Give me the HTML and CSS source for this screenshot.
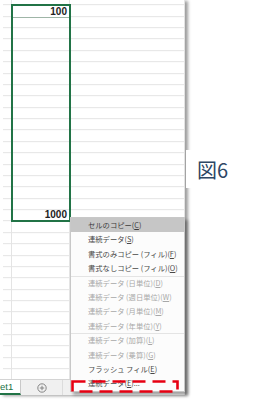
FILE: index.html
```html
<!DOCTYPE html>
<html lang="ja">
<head>
<meta charset="utf-8">
<link rel="stylesheet" href="styles.css">
</head>
<body>
<div class="stage">
  <div class="window">
    <div class="grid">
      <div class="cols">
        <div class="col col-a"></div>
        <div class="col col-b"></div>
        <div class="col col-c"></div>
      </div>
      <div class="selection">
        <div class="cell active">100</div>
        <div class="cell last">1000</div>
      </div>
    </div>
    <div class="tabbar">
      <div class="tab">et1</div>
      <div class="addsheet">
        <svg width="10" height="10" viewBox="0 0 10 10"><circle cx="5" cy="5" r="4.2" fill="none" stroke="#7a7a7a" stroke-width="0.9"/><path d="M5 2.8V7.2M2.8 5H7.2" stroke="#7a7a7a" stroke-width="0.9"/></svg>
      </div>
      <div class="tabrest"></div>
    </div>
  </div>

  <div class="label">図6</div>

  <div class="menu">
    <div class="item hl">セルのコピー(<u>C</u>)</div>
    <div class="item">連続データ(<u>S</u>)</div>
    <div class="item">書式のみコピー (フィル)(<u>F</u>)</div>
    <div class="item">書式なしコピー (フィル)(<u>O</u>)</div>
    <div class="item off sep">連続データ (日単位)(<u>D</u>)</div>
    <div class="item off">連続データ (週日単位)(<u>W</u>)</div>
    <div class="item off">連続データ (月単位)(<u>M</u>)</div>
    <div class="item off">連続データ (年単位)(<u>Y</u>)</div>
    <div class="item off sep">連続データ (加算)(<u>L</u>)</div>
    <div class="item off">連続データ (乗算)(<u>G</u>)</div>
    <div class="item">フラッシュ フィル(<u>E</u>)</div>
    <div class="item">連続データ(<u>E</u>)...</div>
  </div>

  <svg class="redbox" width="112" height="16" viewBox="0 0 112 16">
    <rect x="1.5" y="1.5" width="105" height="10" fill="none" stroke="#e60012" stroke-width="2.6" stroke-dasharray="13 7"/>
  </svg>
</div>
</body>
</html>
```

FILE: styles.css
```css
html, body {
  margin: 0;
  padding: 0;
  background: #ffffff;
}
.stage {
  position: relative;
  width: 254px;
  height: 401px;
  overflow: hidden;
  background: #ffffff;
}
.window {
  width: 184px;
  height: 395px;
  display: flex;
  flex-direction: column;
  border-right: 1px solid #e3e3e3;
  box-shadow: 3px 1px 3px rgba(0, 0, 0, 0.38);
  background: #ffffff;
}
.grid {
  position: relative;
  flex: 1;
  padding-left: 3px;
}
.cols {
  display: flex;
  height: 100%;
  background: repeating-linear-gradient(to bottom, transparent 0, transparent 10.37px, #e4e4e4 10.37px, #e4e4e4 11.37px);
  background-position: 0 -5.87px;
}
.col {
  height: 100%;
  box-sizing: border-box;
  border-right: 1px solid #e4e4e4;
}
.col-a { width: 9px; }
.col-b { width: 58px; }
.col-c { flex: 1; border-right: none; }

.selection {
  position: absolute;
  left: 11px;
  top: 4px;
  width: 56px;
  height: 214px;
  border: 2px solid #217346;
  display: flex;
  flex-direction: column;
  justify-content: space-between;
  font-family: "Liberation Sans", Arial, sans-serif;
  font-weight: bold;
  font-size: 10px;
  color: #222;
}
.cell {
  text-align: right;
  padding-right: 2px;
  line-height: 11px;
}
.cell.active {
  height: 11px;
  background: #fff;
  border-bottom: 1px solid #9fb5a7;
  line-height: 12px;
}
.cell.last {
  line-height: 9px;
  height: 10px;
}

.tabbar {
  height: 15px;
  display: flex;
  border-top: 1px solid #d4d4d4;
  background: #f0f0f0;
}
.tab {
  width: 21px;
  background: #ffffff;
  color: #217346;
  font-family: "Liberation Sans", Arial, sans-serif;
  font-size: 9.5px;
  line-height: 13px;
  border-bottom: 2px solid #217346;
  border-right: 1px solid #c9c9c9;
  box-sizing: border-box;
  height: 15px;
}
.addsheet {
  width: 41px;
  display: flex;
  align-items: center;
  justify-content: center;
  border-right: 1px solid #dcdcdc;
}
.tabrest { flex: 1; }

.label {
  position: absolute;
  left: 186px;
  top: 150px;
  width: 68px;
  height: 38px;
  background: #ffffff;
  display: flex;
  align-items: center;
  padding-left: 11px;
  box-sizing: border-box;
  font-family: "Noto Sans CJK JP", "Noto Sans", sans-serif;
  font-size: 20px;
  color: #2d4765;
  letter-spacing: 0;
}

.menu {
  position: absolute;
  left: 70px;
  top: 217px;
  width: 115px;
  box-sizing: border-box;
  border: 1px solid #c8c8c8;
  background: #fcfcfc;
  box-shadow: 3px 3px 3px rgba(0, 0, 0, 0.32);
  font-family: "Noto Sans CJK JP", "Noto Sans", sans-serif;
  font-size: 7.3px;
  color: #484848;
}
.item {
  height: 14.4px;
  line-height: 14.4px;
  padding-left: 17px;
  white-space: nowrap;
  box-sizing: border-box;
}
.item.hl { background: #c6c6c6; color: #3c3c3c; }
.item.off { color: #a8a8a8; }
.item.sep { border-top: 1px solid #e4e4e4; line-height: 13.4px; }
.item u { text-decoration-thickness: 0.6px; text-underline-offset: 1px; }

.redbox {
  position: absolute;
  left: 71px;
  top: 380px;
}
```
